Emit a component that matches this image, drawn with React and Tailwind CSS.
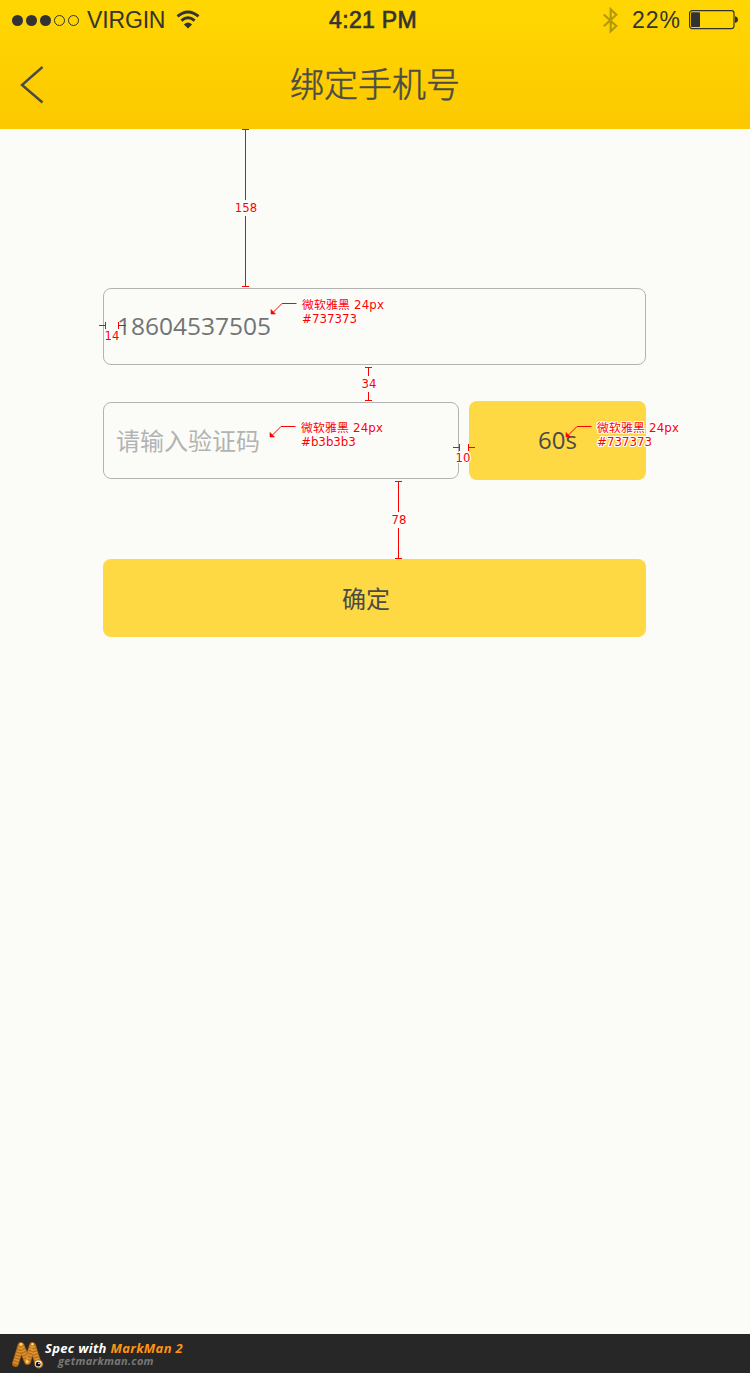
import React from "react";

const SANS = "font-['Open_Sans','Noto_Sans_CJK_SC',sans-serif]";
const NOTE = "font-['DejaVu_Sans','Noto_Sans_CJK_SC',sans-serif]";
const HALO =
  "[text-shadow:1px_0_0_#fff,-1px_0_0_#fff,0_1px_0_#fff,0_-1px_0_#fff,1px_1px_0_#fff,-1px_-1px_0_#fff,1px_-1px_0_#fff,-1px_1px_0_#fff]";

function StatusBar() {
  return (
    <div className="grid h-10 grid-cols-3 items-center font-['Liberation_Sans',sans-serif] text-[23px] leading-none text-[#333]">
      <div className="flex items-center pl-3">
        <div className="flex gap-[3px]">
          {[true, true, true, false, false].map((on, i) => (
            <span
              key={i}
              className={
                on
                  ? "size-[11px] rounded-full bg-[#333]"
                  : "size-[11px] rounded-full border border-[#333]"
              }
            />
          ))}
        </div>
        <span className="ml-2 w-[78px] whitespace-nowrap tracking-[-0.15px]">VIRGIN</span>
        <svg className="ml-[11px] -mt-px" width="24" height="19" viewBox="0 0 24 19" fill="none" stroke="#333">
          <path d="M1.5 6.3Q12 -2.4 22.5 6.3" strokeWidth="2.9" />
          <path d="M5.4 10.6Q12 4.8 18.6 10.6" strokeWidth="2.9" />
          <path d="M7.9 14.4Q12 10.8 16.1 14.4L12 18.4Z" fill="#333" stroke="none" />
        </svg>
      </div>
      <span className="whitespace-nowrap pr-[4px] text-center tracking-[0.3px] [-webkit-text-stroke:0.7px_#333]">
        4:21 PM
      </span>
      <div className="flex items-center justify-end pr-[11px]">
        <svg width="16" height="27" viewBox="0 0 16 27" fill="none" stroke="#b39a0c" strokeWidth="2.2">
          <path d="M1.8 7.5L14.3 19L8.7 24.3V2.3L14.3 7.7L1.8 19.2" />
        </svg>
        <span className="ml-[14px] w-[49px] whitespace-nowrap tracking-[0.9px]">22%</span>
        <svg className="ml-2" width="50" height="20" viewBox="0 0 50 20">
          <rect x="0.6" y="0.6" width="44.4" height="18" rx="2.5" fill="none" stroke="#333" strokeWidth="1.2" />
          <rect x="2" y="2.3" width="9" height="14.8" rx="1" fill="#333" />
          <path d="M46 6.3Q49 7.2 49 9.7T46 13Z" fill="#333" />
        </svg>
      </div>
    </div>
  );
}

function NavBar() {
  return (
    <div className="grid h-[89px] grid-cols-[100px_1fr_100px] items-center">
      <svg className="ml-5" width="25" height="38" viewBox="0 0 25 38" fill="none" stroke="#4a4a4a" strokeWidth="2.4">
        <path d="M22.5 1L2 19L22.5 36.5" />
      </svg>
      <h1 className="pb-[4px] text-center font-['Noto_Sans_CJK_SC',sans-serif] text-[34px] font-light leading-[50px] text-[#4a4a4a] [-webkit-text-stroke:0.5px_#4a4a4a]">
        绑定手机号
      </h1>
    </div>
  );
}

function Measurements() {
  return (
    <svg
      className="pointer-events-none absolute inset-0"
      width="750"
      height="1334"
      viewBox="0 0 750 1334"
      fill="none"
      stroke="#f00"
      shapeRendering="crispEdges"
    >
      <path d="M242 129.5H249M245.5 129V200M245.5 216V287M242 286.5H249" />
      <path d="M365 367.5H372M368.5 367V376M368.5 392V401M365 400.5H372" />
      <path d="M395 481.5H402M398.5 481V512M398.5 528V559M395 558.5H402" />
      <path d="M99 325.5H105M105.5 322V329M118.5 322V329M119 325.5H126" />
      <path d="M453 447.5H459M459.5 444V451M468.5 444V451M469 447.5H475" />
      <g shapeRendering="auto">
        <path d="M296.5 303.5H282L272 313.5M295.5 426.5H281L271 436.5M591.5 426.5H577L567 436.5" />
        <path d="M271 309.5V314H275.5ZM270 432.5V437H274.5ZM566 432.5V437H570.5Z" fill="#f00" strokeWidth="0.6" />
      </g>
    </svg>
  );
}

function Distance({ className, children }) {
  return (
    <span
      className={`absolute -translate-x-1/2 text-[11.7px] leading-[14px] text-[#f00] ${NOTE} ${HALO} ${className}`}
    >
      {children}
    </span>
  );
}

function FontNote({ className, color }) {
  return (
    <div
      className={`absolute whitespace-nowrap text-[11.8px] leading-[14px] text-[#f00] ${NOTE} ${HALO} ${className}`}
    >
      <div className="tracking-[0.2px]">微软雅黑 24px</div>
      <div>{color}</div>
    </div>
  );
}

function Footer() {
  return (
    <footer className="flex h-[39px] items-start bg-[#272727] pl-[11px] font-['Open_Sans',sans-serif] font-bold italic">
      <svg className="mt-[6px]" width="33" height="29" viewBox="0 0 33 29" fill="none" strokeLinecap="round" strokeLinejoin="round">
        <path d="M4.5 23.5L10 5.5L16.5 21.5L21.5 5.5L27 23" stroke="#5f370e" strokeWidth="7.4" />
        <path d="M4.5 23.5L10 5.5L16.5 21.5L21.5 5.5L27 23" stroke="#b96f1a" strokeWidth="6.4" />
        <path d="M4.5 23.5L10 5.5L16.5 21.5L21.5 5.5L27 23" stroke="#dc9838" strokeWidth="5" strokeLinecap="butt" strokeDasharray="1.4 1.6" />
        <circle cx="10" cy="4.2" r="1.2" fill="#ffe46b" />
        <circle cx="21.5" cy="4.2" r="1.2" fill="#ffe46b" />
        <circle cx="16" cy="21.5" r="1.2" fill="#ffe46b" />
        <circle cx="27.8" cy="24" r="4.4" fill="#c47a22" />
        <circle cx="27.3" cy="23.7" r="3.3" fill="#fff" />
        <circle cx="27.2" cy="24.2" r="2.4" fill="#111" />
        <circle cx="28" cy="23.4" r="0.8" fill="#fff" />
      </svg>
      <div className="flex flex-col items-start pl-px pt-[7px]">
        <p className="whitespace-nowrap text-[13px] leading-[14px] tracking-[0.33px] text-white">
          Spec with <span className="text-[#ff9411]">MarkMan 2</span>
        </p>
        <p className="ml-[13px] text-[11px] leading-[11px] tracking-[0.28px] text-[#777]">getmarkman.com</p>
      </div>
    </footer>
  );
}

export default function App() {
  return (
    <div className={`relative flex h-[1373px] w-[750px] flex-col overflow-hidden bg-[#fbfcf8] ${SANS}`}>
      <header className="h-[129px] bg-linear-to-b from-[#ffd702] to-[#fcc800]">
        <StatusBar />
        <NavBar />
      </header>

      <main className="flex flex-1 flex-col pl-[103px] pt-[159px] text-[24px] leading-none">
        <div className="flex h-[77px] w-[543px] items-center rounded-lg border border-[#b3b3b3] pl-[13px] text-[24.5px] text-[#737373]">
          18604537505
        </div>
        <div className="mt-9 flex w-[543px] items-center gap-[10px]">
          <div className="flex h-[77px] w-[356px] items-center rounded-lg border border-[#b3b3b3] pl-3 text-[#b3b3b3]">
            请输入验证码
          </div>
          <button className="h-[79px] w-[177px] rounded-lg bg-[#ffd943] pb-px text-[#4a4a4a]">60s</button>
        </div>
        <button className="mt-[79px] h-[78px] w-[543px] rounded-lg bg-[#ffd943] pr-[17px] pt-[2px] text-[#4a4a4a]">
          确定
        </button>
      </main>

      <Footer />

      <Measurements />
      <Distance className="left-[246px] top-[201px]">158</Distance>
      <Distance className="left-[369px] top-[377px]">34</Distance>
      <Distance className="left-[399px] top-[513px]">78</Distance>
      <Distance className="left-[112px] top-[329px]">14</Distance>
      <Distance className="left-[463px] top-[451px]">10</Distance>
      <FontNote className="left-[302px] top-[298px]" color="#737373" />
      <FontNote className="left-[301px] top-[421px]" color="#b3b3b3" />
      <FontNote className="left-[597px] top-[421px]" color="#737373" />
    </div>
  );
}
